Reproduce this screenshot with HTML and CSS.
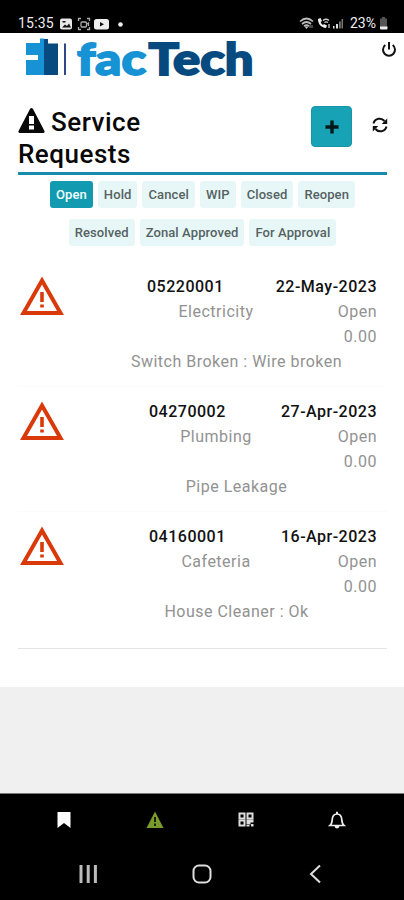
FILE: index.html
```
<!DOCTYPE html>
<html lang="en">
<head>
<meta charset="utf-8">
<title>Service Requests</title>
<link rel="stylesheet" href="styles.css">
</head>
<body>
<div class="status">
  <span class="time">15:35</span>
  <svg class="status-left" width="66" height="14" viewBox="0 0 66 14">
    <rect x="0" y="1.500" width="12" height="11" rx="2" fill="#e8e8e8"/>
    <path d="M2 10.500l3-3 2 1.500 2-2.500 2 4zM2.500 4h3v1.500h-3z" fill="#111"/>
    <g fill="none" stroke="#aaa" stroke-width="1.300"><path d="M18.500 4V1.500H21M27 1.500h2.500V4M29.500 10v2.500H27M21 12.500h-2.500V10"/><rect x="21" y="5" width="5.500" height="5" rx="1"/><path d="M27 7l1.500-1v3"/></g>
    <rect x="34" y="2" width="15" height="10.500" rx="2.500" fill="#eee"/>
    <path d="M40 5v4.500l4-2.200z" fill="#111"/>
    <circle cx="60.500" cy="7.500" r="2.300" fill="#eee"/>
  </svg>
  <svg class="status-right" width="48" height="14" viewBox="0 0 48 14">
    <g fill="none" stroke="#bbb" stroke-width="1.700"><path d="M1 5.500Q7.500-.500 14 5.500M3 8Q7.500 4 12 8M5 10.200Q7.500 8 10 10.200"/></g>
    <path d="M5.500 10.500h4l-2 2.500z" fill="#ccc"/><path d="M11 9v3M13 12V9" stroke="#888"/>
    <path d="M19 3c0 5 3 8.500 8 9l1-2.500-3-1.500-1 1c-1.500-.800-2-2-2.300-3L23 5l-1.500-3z" fill="#eee"/>
    <path d="M24 4.500q3-2.500 6 0M25.500 6.500q1.500-1.300 3.500 0M30 8v4" fill="none" stroke="#ccc" stroke-width="1.300"/>
    <path d="M34 10h1.500v2.500H34zM37 8h2v4.500h-2z" fill="#ddd"/><path d="M40 5.500h1.800v7H40zM42.500 3h1.500v9.500h-1.500z" fill="#777"/>
  </svg>
  <span class="percent">23%</span>
  <svg class="battery" width="9" height="13" viewBox="0 0 9 13"><path d="M3 0h3v1.500h2V10H1V1.500h2z" fill="#555"/><path d="M1 9.500h7.500v2q0 1-1 1h-5.500q-1 0-1-1z" fill="#eee"/></svg>
</div>

<header class="brand">
  <svg class="logo" width="240" height="56" viewBox="0 0 240 56">
    <path d="M1 8h14V4h5v36H1V25h12v-5H1z" fill="#1793d5"/>
    <path d="M18 4h5v4.500h10V40H18z" fill="#074a80"/>
    <path d="M15 3.500h4V40h-4z" fill="#1793d5"/>
    <path d="M40 8.500V40" stroke="#17357b" stroke-width="1.800"/>
    <text class="wordmark fac" x="52" y="39.500" textLength="69" lengthAdjust="spacingAndGlyphs">fac</text>
    <text class="wordmark tech" x="123.500" y="39.500" textLength="105" lengthAdjust="spacingAndGlyphs">Tech</text>
  </svg>
  <svg class="power" width="16" height="17" viewBox="0 0 16 17"><path d="M4.300 4a6 6 0 1 0 7.400 0M8 1v7.500" fill="none" stroke="#111" stroke-width="2"/></svg>
</header>

<main class="page">
  <section class="heading">
    <h1><svg class="warn" width="27" height="25" viewBox="0 0 27 25"><path fill-rule="evenodd" d="M12 1q1.500-2 3 0l11.500 22q.500 2-1.500 2H2q-2 0-1.500-2zM11 8v8h5V8zM11 17.500v4h5v-4z" fill="#080808"/></svg> Service Requests</h1>
    <button class="add" aria-label="Add"><svg width="14" height="14" viewBox="0 0 14 14"><path d="M7 .500v13M.500 7h13" stroke="#07181b" stroke-width="3.400"/></svg></button>
    <svg class="refresh" width="16" height="16" viewBox="0 0 16 16"><path d="M1.500 6.500C3 1 9.500.300 12.500 4M14.500 9.500C13 15 6.500 15.700 3.500 12" fill="none" stroke="#111" stroke-width="2"/><path d="M15.200 1.500v5.500h-5.500zM.800 14.500V9h5.500z" fill="#111"/></svg>
  </section>

  <nav class="filters">
    <div class="chips"><span class="chip active">Open</span><span class="chip">Hold</span><span class="chip">Cancel</span><span class="chip">WIP</span><span class="chip">Closed</span><span class="chip">Reopen</span></div>
    <div class="chips"><span class="chip">Resolved</span><span class="chip">Zonal Approved</span><span class="chip">For Approval</span></div>
  </nav>

  <section class="list">
    <article class="item">
      <svg class="alert" width="44" height="40" viewBox="0 0 44 40"><path d="M22 4.500L40.500 37H3.500z" fill="none" stroke="#da3a09" stroke-width="4"/><path d="M22 16v10M22 28.500v3" stroke="#da3a09" stroke-width="3.600"/></svg>
      <div class="info">
        <div class="line"><b class="number first">05220001</b><b class="date">22-May-2023</b></div>
        <div class="line"><span class="kind">Electricity</span><span>Open</span></div>
        <div class="line amount">0.00</div>
        <div class="note">Switch Broken : Wire broken</div>
      </div>
    </article>
    <article class="item">
      <svg class="alert" width="44" height="40" viewBox="0 0 44 40"><path d="M22 4.500L40.500 37H3.500z" fill="none" stroke="#da3a09" stroke-width="4"/><path d="M22 16v10M22 28.500v3" stroke="#da3a09" stroke-width="3.600"/></svg>
      <div class="info">
        <div class="line"><b class="number">04270002</b><b class="date">27-Apr-2023</b></div>
        <div class="line"><span class="kind">Plumbing</span><span>Open</span></div>
        <div class="line amount">0.00</div>
        <div class="note">Pipe Leakage</div>
      </div>
    </article>
    <article class="item">
      <svg class="alert" width="44" height="40" viewBox="0 0 44 40"><path d="M22 4.500L40.500 37H3.500z" fill="none" stroke="#da3a09" stroke-width="4"/><path d="M22 16v10M22 28.500v3" stroke="#da3a09" stroke-width="3.600"/></svg>
      <div class="info">
        <div class="line"><b class="number">04160001</b><b class="date">16-Apr-2023</b></div>
        <div class="line"><span class="kind">Cafeteria</span><span>Open</span></div>
        <div class="line amount">0.00</div>
        <div class="note">House Cleaner : Ok</div>
      </div>
    </article>
  </section>
</main>

<footer class="bottom">
  <div class="tabs">
    <svg width="18" height="18" viewBox="0 0 18 18"><path d="M2.500 1h13v16L9 12l-6.500 5z" fill="#fff"/></svg>
    <svg width="18" height="18" viewBox="0 0 18 18"><path d="M9 .500L17.500 17H.500z" fill="#789b2c"/><path d="M9 6v5M9 12.500v2.500" stroke="#18200a" stroke-width="2"/></svg>
    <svg width="18" height="18" viewBox="0 0 18 18"><g fill="none" stroke="#ddd" stroke-width="2"><rect x="2.500" y="2.500" width="5" height="5"/><rect x="2.500" y="9.500" width="5" height="5"/><rect x="10.500" y="2.500" width="5" height="5"/></g><path d="M9.500 8.500h7v3h-3v2h-4zM9.500 14h3v1.500h-3zM14 13h2.500v2.500H14z" fill="#ddd"/></svg>
    <svg width="18" height="18" viewBox="0 0 18 18"><path d="M2 14.500c2-1.500 2-3 2.200-6C4.500 5 6 3 9 3s4.500 2 4.800 5.500c.200 3 .200 4.500 2.200 6z" fill="none" stroke="#eee" stroke-width="1.700"/><path d="M8 .800h2V3H8zM6.500 15h5q-.500 2.500-2.500 2.500T6.500 15z" fill="#eee"/></svg>
  </div>
  <div class="system">
    <svg width="20" height="20" viewBox="0 0 20 20"><path d="M3 1v18M10.200 1v18M17.400 1v18" stroke="#bbb" stroke-width="3"/></svg>
    <svg width="20" height="20" viewBox="0 0 20 20"><rect x="1.500" y="1.500" width="17" height="17" rx="5.500" fill="none" stroke="#ddd" stroke-width="2"/></svg>
    <svg width="20" height="20" viewBox="0 0 20 20"><path d="M15 1.500L6 10l9 8.500" fill="none" stroke="#ddd" stroke-width="2"/></svg>
  </div>
</footer>
</body>
</html>
```

FILE: styles.css
```
* { box-sizing: border-box; }
body { margin: 0; width: 404px; height: 900px; display: flex; flex-direction: column; background: #f0f0f0; font-family: Roboto, sans-serif; }
svg { display: block; flex: none; }
.status { height: 33px; flex: none; background: #000; color: #eee; display: flex; padding: 14px 0 0 18px; font-size: 14px; line-height: 18px; }
.time { width: 42px; letter-spacing: .2px; }
.status-left { margin-top: 3px; }
.status-right { margin: 2px 0 0 173px; }
.percent { margin-left: 3px; width: 28px; }
.battery { margin: 3px 0 0 1px; }
.brand { height: 64px; flex: none; display: flex; justify-content: space-between; padding: 2px 7px 0 25px; background: #fff; }
.logo { overflow: visible; }
.wordmark { font-family: Lato, sans-serif; font-weight: 900; font-size: 44px; stroke-width: 1.8px; }
.fac { fill: #1793d5; stroke: #1793d5; }
.tech { fill: #074a80; stroke: #074a80; }
.power { margin-top: 6px; }
.page { height: 590px; flex: none; padding: 0 17px 0 18px; background: #fff; }
.heading { height: 78px; display: flex; align-items: flex-start; border-bottom: 3px solid #198bae; }
h1 { margin: 9px auto 0 0; width: 180px; font-size: 26px; line-height: 32px; font-weight: 500; letter-spacing: .5px; color: #080808; }
.warn { display: inline-block; vertical-align: -2px; margin-right: -1px; }
.add { flex: none; width: 41px; height: 41px; margin-top: 9px; padding: 0; border: 1px solid #1595a5; border-radius: 4px; background: #17a2b5; display: flex; align-items: center; justify-content: center; }
.refresh { margin: 20px -1px 0 20px; }
.filters { display: flex; flex-direction: column; gap: 11px; padding-top: 6px; height: 86px; }
.chips { display: flex; justify-content: center; gap: 5px; }
.chip { height: 27px; padding: 0 6px; border-radius: 3px; background: #e7f7f7; color: #566262; font-size: 13px; line-height: 27px; font-weight: 500; letter-spacing: .1px; white-space: nowrap; }
.chip.active { background: #129bb0; color: #f3ffff; }
.list { height: 388px; border-bottom: 1px solid #e5e5e5; }
.item { height: 125px; display: flex; padding: 13px 10px 0 2px; }
.item + .item { box-shadow: inset 0 1px #fbfbfb; }
.alert { margin-top: 2px; }
.info { flex: 1; margin-left: 32px; color: #929292; font-size: 16px; line-height: 25px; letter-spacing: .5px; }
.line { display: flex; justify-content: space-between; }
.line b { color: #111; font-weight: 500; }
.number { margin-left: 53px; }
.number.first { margin-left: 51px; }
.kind { width: 240px; text-align: center; }
.amount { justify-content: flex-end; }
.note { text-align: center; }
.bottom { height: 107px; margin-top: auto; background: #000; border-top: 1px solid #777; }
.tabs { display: flex; justify-content: space-between; padding: 17px 58px 0 55px; height: 53px; }
.system { display: flex; justify-content: space-between; padding: 17px 79px 0 78px; }
```
